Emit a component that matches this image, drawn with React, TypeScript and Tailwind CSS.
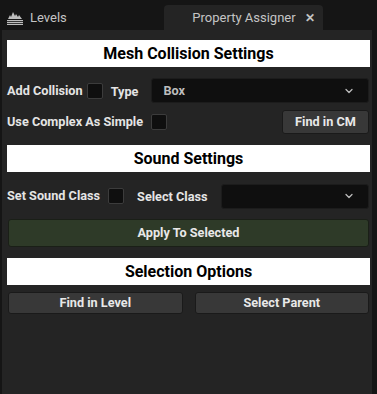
import { ChevronDown } from 'lucide-react';

const font = { fontFamily: 'Roboto, "Liberation Sans", sans-serif' };

const SectionHeader = ({ title }: { title: string }) => (
  <div className="h-[27px] w-[363px] bg-white flex items-center justify-center text-[16px] font-bold text-black">
    {title}
  </div>
);

const Checkbox = () => (
  <div className="w-[16px] h-[16px] rounded-[2px] bg-[#0f0f0f] border border-[#3c3c3c] shrink-0" />
);

const Label = ({ children }: { children: string }) => (
  <span className="text-[12.7px] font-bold text-[#e4e4e4] whitespace-nowrap">{children}</span>
);

const Dropdown = ({ value }: { value?: string }) => (
  <div className="flex-1 h-[25px] mr-[1px] rounded-[3px] bg-[#0f0f0f] border border-[#1c1c1c] flex items-center justify-between pl-[11px] pr-[13px]">
    <span className="text-[12.7px] font-bold text-[#bdbdbd]">{value}</span>
    <ChevronDown size={12} strokeWidth={2.5} className="text-[#bdbdbd]" />
  </div>
);

const Button = ({ children, className }: { children: string; className: string }) => (
  <div
    className={
      'flex items-center justify-center rounded-[3px] border border-[#1a1a1a] bg-[#383838] text-[12.7px] font-bold text-[#e8e8e8] ' +
      className
    }
  >
    {children}
  </div>
);

const LevelsIcon = () => (
  <svg width="16" height="14" viewBox="0 0 16 14" fill="#bdbdbd">
    <path d="M1 8 L3 4 L4 6 L6 1 L8 5 L9 3 L11 6 L12 4 L15 8 Z" />
    <rect x="0" y="9" width="16" height="1.2" />
    <rect x="0" y="11" width="16" height="1.2" />
    <rect x="0" y="13" width="16" height="1" />
  </svg>
);

const App = () => {
  return (
    <div className="w-[377px] h-[394px] bg-[#151515] flex flex-col overflow-hidden" style={font}>
      <div className="h-[30px] flex items-end shrink-0">
        <div className="h-[25px] flex items-center gap-[7px] pl-[7px] w-[164px]">
          <LevelsIcon />
          <span className="text-[13px] text-[#c4c4c4]">Levels</span>
        </div>
        <div className="h-[25px] w-[159px] bg-[#242424] rounded-t-[4px] flex items-center justify-center gap-[9px] pl-[20px]">
          <span className="text-[13px] text-[#c4c4c4]">Property Assigner</span>
          <span className="text-[12px] font-bold text-[#c4c4c4] leading-none">✕</span>
        </div>
      </div>
      <div className="flex-1 pl-[2px] pr-[5px]">
        <div className="h-full bg-[#242424] pl-[5px] pr-[2px] pt-[10px] flex flex-col">
          <SectionHeader title="Mesh Collision Settings" />
          <div className="mt-[11px] h-[25px] flex items-center">
            <Label>Add Collision</Label>
            <div className="ml-[4px]">
              <Checkbox />
            </div>
            <span className="ml-[8px] mr-[13px]">
              <Label>Type</Label>
            </span>
            <Dropdown value="Box" />
          </div>
          <div className="mt-[7px] h-[24px] flex items-center">
            <Label>Use Complex As Simple</Label>
            <div className="ml-[8px]">
              <Checkbox />
            </div>
            <Button className="ml-auto mr-[1px] w-[87px] h-[24px]">Find in CM</Button>
          </div>
          <div className="mt-[11px]">
            <SectionHeader title="Sound Settings" />
          </div>
          <div className="mt-[12px] h-[24px] flex items-center">
            <Label>Set Sound Class</Label>
            <div className="ml-[8px]">
              <Checkbox />
            </div>
            <span className="ml-[13px] mr-[13px]">
              <Label>Select Class</Label>
            </span>
            <Dropdown />
          </div>
          <div className="mt-[11px] ml-[1px] mr-[1px] h-[28px] rounded-[3px] bg-[#2e3a28] border border-[#1a1f17] flex items-center justify-center text-[12.7px] font-bold text-[#e8e8e8]">
            Apply To Selected
          </div>
          <div className="mt-[11px]">
            <SectionHeader title="Selection Options" />
          </div>
          <div className="mt-[7px] ml-[1px] mr-[1px] flex gap-[12px]">
            <Button className="flex-1 h-[22px]">Find in Level</Button>
            <Button className="flex-1 h-[22px]">Select Parent</Button>
          </div>
        </div>
      </div>
    </div>
  );
};

export default App;
